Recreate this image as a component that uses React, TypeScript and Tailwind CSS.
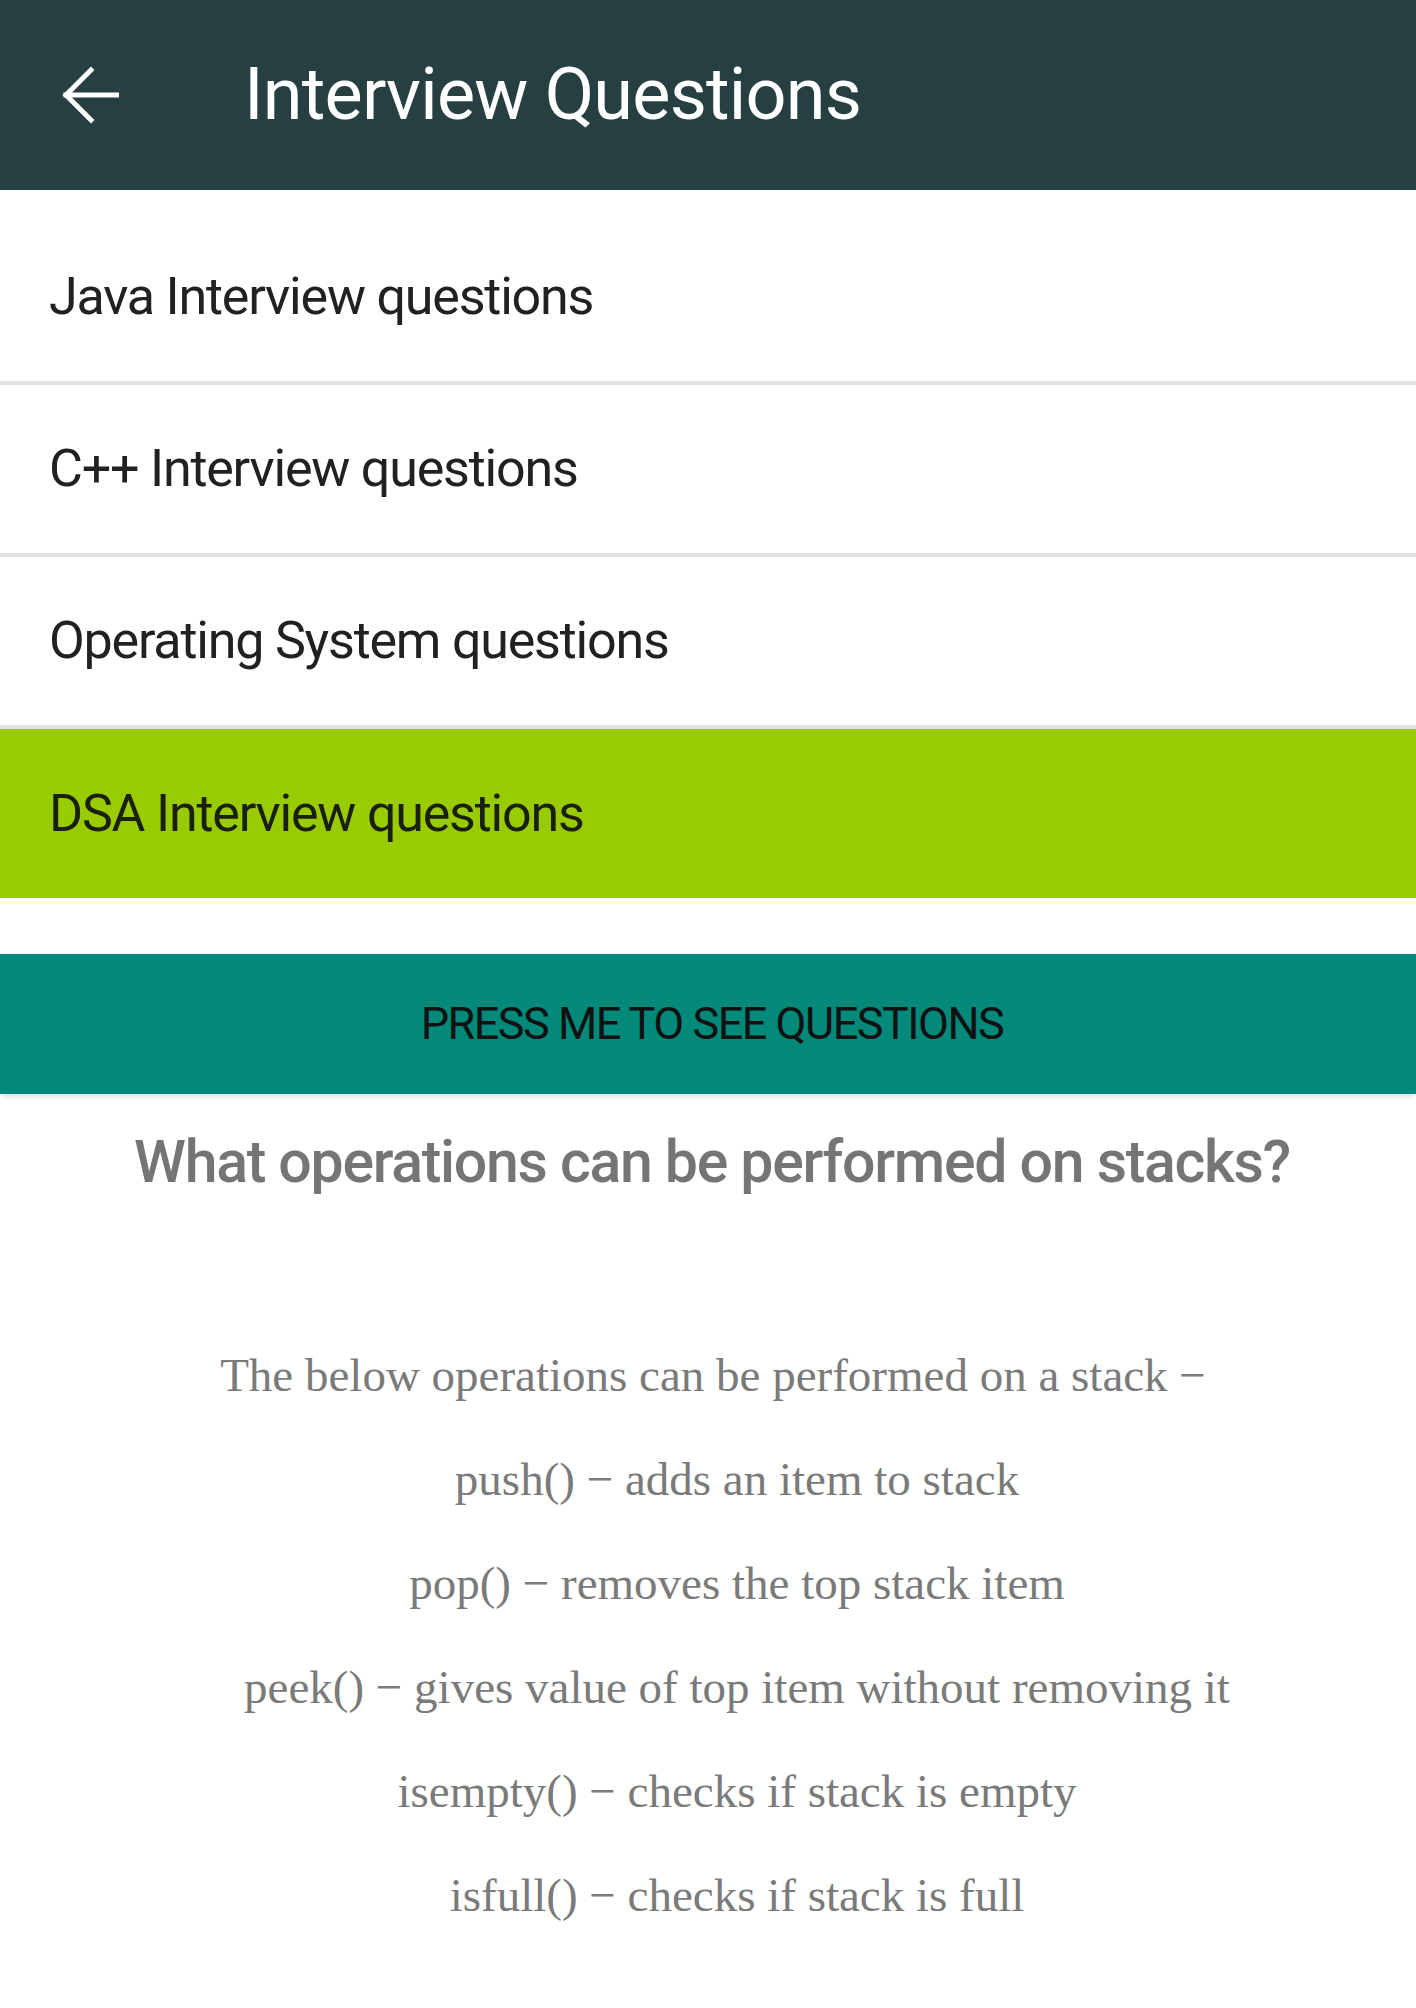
import React from 'react';

const topics = [
  'Java Interview questions',
  'C++ Interview questions',
  'Operating System questions',
];

const answerLines = [
  'push() − adds an item to stack',
  'pop() − removes the top stack item',
  'peek() − gives value of top item without removing it',
  'isempty() − checks if stack is empty',
  'isfull() − checks if stack is full',
];

function BackArrow() {
  return (
    <svg width="58" height="58" viewBox="0 0 58 58" fill="none" stroke="white" strokeWidth="5" strokeLinecap="square">
      <path d="M5 29 H56" />
      <path d="M30 4 L5 29 L30 54" strokeLinejoin="miter" />
    </svg>
  );
}

export default function App() {
  return (
    <div className="min-h-screen bg-white" style={{ fontFamily: 'Roboto, "Noto Sans", sans-serif' }}>
      <header className="h-[190px] bg-[#263f40] flex items-center">
        <div className="ml-[61px] w-[58px]">
          <BackArrow />
        </div>
        <h1 className="ml-[125px] text-white text-[72px] leading-none font-normal tracking-[-0.8px]">Interview Questions</h1>
      </header>

      <div className="pt-[23px]">
        {topics.map((t) => (
          <div key={t} className="h-[172px] flex items-center pl-[49px] border-b-4 border-[#e0e0e0] text-[52px] text-[#212121] tracking-[-1.2px]">
            {t}
          </div>
        ))}
        <div className="h-[169px] flex items-center pl-[49px] bg-[#99cc00] text-[52px] text-[#1b1f10] tracking-[-1.2px]">
          DSA Interview questions
        </div>
      </div>

      <button className="mt-[56px] w-full h-[140px] pl-[8px] bg-[#02897a] text-[#111] text-[45px] tracking-[-1.5px] shadow-md flex items-center justify-center">
        PRESS ME TO SEE QUESTIONS
      </button>

      <h2 className="mt-[32px] pl-[8px] text-center text-[59px] leading-[71px] font-medium tracking-[-1.3px] text-[#757575]">
        What operations can be performed on stacks?
      </h2>

      <div className="mt-[126px] text-center text-[47px] leading-[104px] text-[#7a7a7a]" style={{ fontFamily: '"Liberation Serif", serif' }}>
        <p className="pl-[10px]">The below operations can be performed on a stack −</p>
        {answerLines.map((l) => (
          <p key={l} className="pl-[58px]">{l}</p>
        ))}
      </div>
    </div>
  );
}
